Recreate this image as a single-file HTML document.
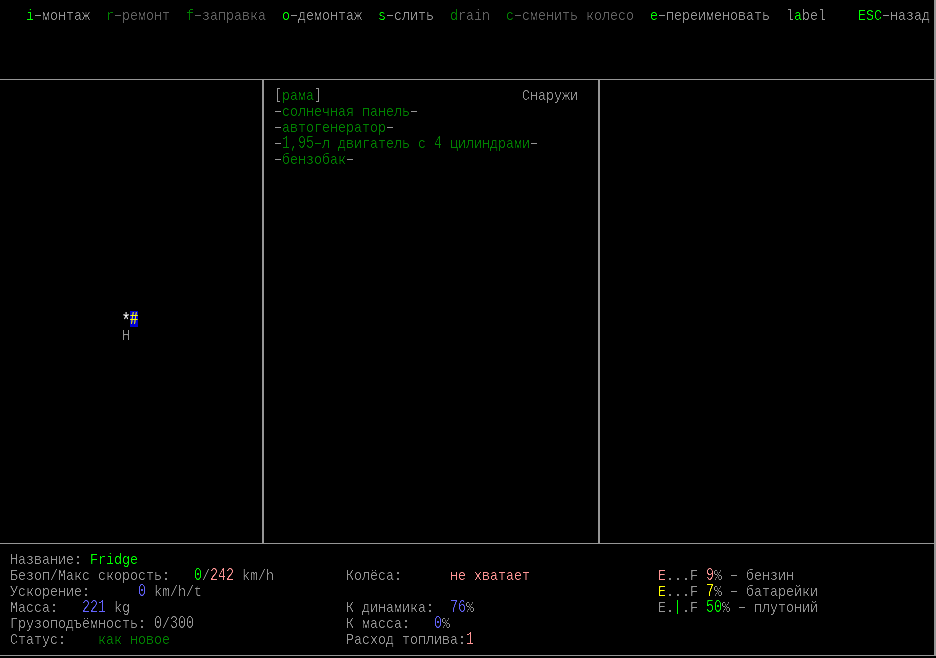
<!DOCTYPE html>
<html lang="ru"><head><meta charset="utf-8"><title>Fridge</title>
<style>
html,body{margin:0;padding:0;background:#000;}
#scr{position:relative;will-change:transform;width:936px;height:658px;overflow:hidden;background:#000;
 font-family:"Liberation Mono","DejaVu Sans Mono",monospace;font-size:15px;line-height:16px;color:#969696;}
.t{position:absolute;height:16px;white-space:pre;margin:0;padding:0;letter-spacing:-0.0015px;transform-origin:0 0;transform:scaleX(0.88889);}
.ln{position:absolute;background:#969696}
.t b{font-weight:normal;display:inline-block;transform:scaleX(1.6)}
.t i{font-style:normal;display:inline-block;transform-origin:50% 11px;transform:scaleY(1.2)}
#txt{position:absolute;left:0;top:0;width:936px;height:658px;filter:url(#th)}
.g,.B{color:#969696} .K{color:#969696;position:relative;top:-1px} .d{color:#636363} .G{color:#00ff00} .n{color:#008200} .P{color:#00ff00;position:relative;left:-0.56px;top:-1px}
.r{color:#ff9696} .b{color:#6464ff} .y{color:#ffff00} .Y{color:#ffff00;-webkit-text-stroke:0.2px #ffff00;display:inline-block;transform-origin:50% 11px;transform:scaleY(1.2)} .w{color:#ffffff;display:inline-block;transform-origin:50% 2px;transform:scale(1.15,1.3)}
.cell{position:absolute;width:8px;height:16px;background:#0000d2}
</style></head>
<body><div id="scr">
<div class="ln" style="left:0px;top:79px;width:936px;height:1px"></div>
<div class="ln" style="left:0px;top:543px;width:936px;height:1px"></div>
<div class="ln" style="left:0px;top:655px;width:936px;height:1px"></div>
<div class="ln" style="left:262px;top:79px;width:2px;height:465px"></div>
<div class="ln" style="left:598px;top:79px;width:2px;height:465px"></div>
<div class="ln" style="left:934px;top:0px;width:2px;height:656px"></div>
<svg width="0" height="0" style="position:absolute"><filter id="th" x="0" y="0" width="100%" height="100%" color-interpolation-filters="sRGB"><feComponentTransfer><feFuncA type="linear" slope="2.5" intercept="-1.05"/></feComponentTransfer></filter></svg>
<div class="cell" style="left:130px;top:311px"></div>
<div id="vehicle-glyphs">
<div class="t" style="left:122px;top:313px"><span class="w">*</span><span class="Y">#</span></div>
</div>
<div id="txt">
<div id="mode-menu">
<div class="t" style="left:26px;top:9px"><span class="G">i</span><span class="g"><b>-</b>монтаж</span></div>
<div class="t" style="left:106px;top:9px"><span class="n">r</span><span class="d"><b>-</b>ремонт</span></div>
<div class="t" style="left:186px;top:9px"><span class="n">f</span><span class="d"><b>-</b>заправка</span></div>
<div class="t" style="left:282px;top:9px"><span class="G">o</span><span class="g"><b>-</b>демонтаж</span></div>
<div class="t" style="left:378px;top:9px"><span class="G">s</span><span class="g"><b>-</b>слить</span></div>
<div class="t" style="left:450px;top:9px"><span class="n">d</span><span class="d">rain</span></div>
<div class="t" style="left:506px;top:9px"><span class="n">c</span><span class="d"><b>-</b>сменить колесо</span></div>
<div class="t" style="left:650px;top:9px"><span class="G">e</span><span class="g"><b>-</b>переименовать</span></div>
<div class="t" style="left:786px;top:9px"><span class="g">l</span><span class="G">a</span><span class="g">bel</span></div>
<div class="t" style="left:858px;top:9px"><span class="G">ESC</span><span class="g"><b>-</b>назад</span></div>
</div>
<div id="parts-list">
<div class="t" style="left:274px;top:89px"><span class="K">[</span><span class="n">рама</span><span class="K">]</span></div>
<div class="t" style="left:522px;top:89px"><span class="g">Снаружи</span></div>
<div class="t" style="left:274px;top:105px"><span class="B"><b>-</b></span><span class="n">солнечная панель</span><span class="B"><b>-</b></span></div>
<div class="t" style="left:274px;top:121px"><span class="B"><b>-</b></span><span class="n">автогенератор</span><span class="B"><b>-</b></span></div>
<div class="t" style="left:274px;top:137px"><span class="B"><b>-</b></span><span class="n"><i>1</i>,<i>95</i><b>-</b>л двигатель с <i>4</i> цилиндрами</span><span class="B"><b>-</b></span></div>
<div class="t" style="left:274px;top:153px"><span class="B"><b>-</b></span><span class="n">бензобак</span><span class="B"><b>-</b></span></div>
</div>
<div id="vehicle-map">
<div class="t" style="left:122px;top:329px"><span class="g">H</span></div>
</div>
<div id="vehicle-stats">
<div class="t" style="left:10px;top:553px"><span class="g">Название: </span><span class="G">Fridge</span></div>
<div class="t" style="left:10px;top:569px"><span class="g">Безоп/Макс скорость:   </span><span class="G"><i>0</i></span><span class="g">/</span><span class="r"><i>242</i></span><span class="g"> km/h</span></div>
<div class="t" style="left:346px;top:569px"><span class="g">Колёса:</span></div>
<div class="t" style="left:450px;top:569px"><span class="r">не хватает</span></div>
<div class="t" style="left:658px;top:569px"><span class="r">E</span><span class="g">...F </span><span class="r"><i>9</i></span><span class="g">% <b>-</b> бензин</span></div>
<div class="t" style="left:10px;top:585px"><span class="g">Ускорение:</span></div>
<div class="t" style="left:138px;top:585px"><span class="b"><i>0</i></span><span class="g"> km/h/t</span></div>
<div class="t" style="left:658px;top:585px"><span class="y">E</span><span class="g">...F </span><span class="y"><i>7</i></span><span class="g">% <b>-</b> батарейки</span></div>
<div class="t" style="left:10px;top:601px"><span class="g">Масса:</span></div>
<div class="t" style="left:82px;top:601px"><span class="b"><i>221</i></span><span class="g"> kg</span></div>
<div class="t" style="left:346px;top:601px"><span class="g">К динамика:</span></div>
<div class="t" style="left:450px;top:601px"><span class="b"><i>76</i></span><span class="g">%</span></div>
<div class="t" style="left:658px;top:601px"><span class="g">E.</span><span class="P">|</span><span class="g">.F </span><span class="G"><i>50</i></span><span class="g">% <b>-</b> плутоний</span></div>
<div class="t" style="left:10px;top:617px"><span class="g">Грузоподъёмность: <i>0</i>/<i>300</i></span></div>
<div class="t" style="left:346px;top:617px"><span class="g">К масса:</span></div>
<div class="t" style="left:434px;top:617px"><span class="b"><i>0</i></span><span class="g">%</span></div>
<div class="t" style="left:10px;top:633px"><span class="g">Статус:</span></div>
<div class="t" style="left:98px;top:633px"><span class="n">как новое</span></div>
<div class="t" style="left:346px;top:633px"><span class="g">Расход топлива:</span><span class="r"><i>1</i></span></div>
</div>
</div>
</div></body></html>
